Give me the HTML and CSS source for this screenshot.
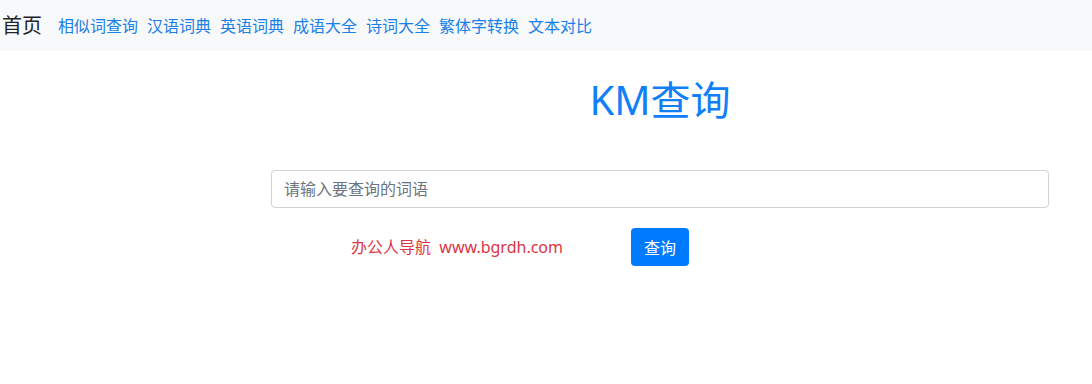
FILE: index.html
```html
<!DOCTYPE html>
<html lang="zh">
<head>
<meta charset="utf-8">
<title>KM查询</title>
<link rel="stylesheet" href="styles.css">
</head>
<body>
<nav class="navbar">
  <a class="brand" href="#">首页</a>
  <div class="links">
    <a href="#">相似词查询</a>
    <a href="#">汉语词典</a>
    <a href="#">英语词典</a>
    <a href="#">成语大全</a>
    <a href="#">诗词大全</a>
    <a href="#">繁体字转换</a>
    <a href="#">文本对比</a>
  </div>
</nav>
<main class="main">
  <div class="col">
    <h1 class="title">KM查询</h1>
    <input class="search" type="text" placeholder="请输入要查询的词语">
    <div class="actions">
      <div class="ad">办公人导航&nbsp; www.bgrdh.com</div>
      <button class="btn">查询</button>
      <div></div>
    </div>
  </div>
</main>
</body>
</html>
```
FILE: styles.css
```css
* { box-sizing: border-box; }
html, body { margin: 0; padding: 0; background: #fff; }
body {
  font-family: "Noto Sans", "Noto Sans CJK SC", sans-serif;
  font-size: 16px;
  line-height: 1.5;
  color: #212529;
}
.navbar {
  height: 51px;
  background: #f8f9fa;
  display: flex;
  align-items: center;
  padding: 0 2px;
}
.brand {
  font-size: 20px;
  color: #212529;
  text-decoration: none;
  margin-right: 16px;
  line-height: 1;
}
.links { display: flex; gap: 9px; }
.links a {
  color: #1a7fe8;
  text-decoration: none;
  font-size: 16px;
  line-height: 1;
}
.main {
  padding-left: 271px;
  padding-right: 43px;
}
.col { display: flex; flex-direction: column; }
.title {
  margin: 26px 0 0 0;
  height: 93px;
  text-align: center;
  font-size: 40px;
  font-weight: 400;
  color: #1180f7;
  line-height: 46px;
}
.search {
  height: 38px;
  width: 100%;
  border: 1px solid #ced4da;
  border-radius: 4px;
  padding: 6px 12px;
  font-family: inherit;
  font-size: 16px;
  color: #495057;
  outline: none;
}
.search::placeholder { color: #6c757d; }
.actions {
  margin-top: 20px;
  display: grid;
  grid-template-columns: 1fr auto 1fr;
  align-items: center;
}
.ad {
  text-align: right;
  padding-right: 68px;
  color: #dc3545;
  font-size: 16px;
}
.btn {
  width: 58px;
  height: 38px;
  background: #007bff;
  color: #fff;
  border: none;
  border-radius: 4px;
  font-family: inherit;
  font-size: 16px;
  padding: 0;
}
```
